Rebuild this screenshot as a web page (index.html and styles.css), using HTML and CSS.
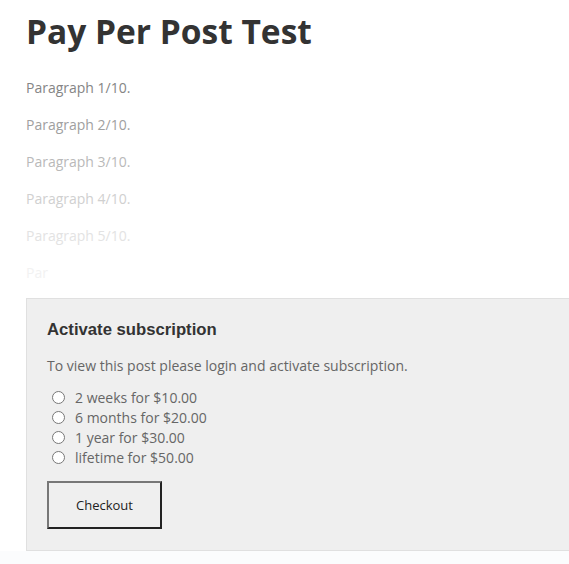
FILE: index.html
```html
<!DOCTYPE html>
<html lang="en">
<head>
<meta charset="utf-8">
<title>Pay Per Post Test</title>
<link rel="stylesheet" href="styles.css">
</head>
<body>
<main class="page">
  <article class="post">
    <h1 class="title">Pay Per Post Test</h1>
    <div class="excerpt">
      <p class="para p1">Paragraph 1/10.</p>
      <p class="para p2">Paragraph 2/10.</p>
      <p class="para p3">Paragraph 3/10.</p>
      <p class="para p4">Paragraph 4/10.</p>
      <p class="para p5">Paragraph 5/10.</p>
      <p class="para p6">Par</p>
    </div>
    <section class="paywall">
      <h3 class="paywall-title">Activate subscription</h3>
      <p class="paywall-text">To view this post please login and activate subscription.</p>
      <ul class="plans">
        <li class="plan"><input type="radio" name="plan" class="radio"><span>2 weeks for $10.00</span></li>
        <li class="plan"><input type="radio" name="plan" class="radio"><span>6 months for $20.00</span></li>
        <li class="plan"><input type="radio" name="plan" class="radio"><span>1 year for $30.00</span></li>
        <li class="plan"><input type="radio" name="plan" class="radio"><span>lifetime for $50.00</span></li>
      </ul>
      <button class="checkout" type="button">Checkout</button>
    </section>
  </article>
  <div class="footer"></div>
</main>
</body>
</html>
```
FILE: styles.css
```css
html, body {
  margin: 0;
  padding: 0;
  background: #ffffff;
}
body {
  font-family: "Open Sans", "Noto Sans", sans-serif;
  color: #333;
}
.page {
  display: flex;
  flex-direction: column;
  min-height: 564px;
}
.post {
  padding: 0 0 0 26px;
}
.title {
  margin: 0;
  padding-top: 9px;
  font-size: 33.5px;
  line-height: 44px;
  font-weight: 700;
  color: #333;
}
.excerpt {
  padding-top: 25px;
}
.para {
  margin: 0 0 18px 0;
  font-size: 14px;
  line-height: 19px;
}
.p1 { color: #858585; }
.p2 { color: #a0a0a0; }
.p3 { color: #b9b9b9; }
.p4 { color: #d0d0d0; }
.p5 { color: #e3e3e3; }
.p6 { color: #f2f2f2; margin-bottom: 16px; }
.paywall {
  background: #efefef;
  border: 1px solid #e0e0e0;
  border-right: none;
  padding: 21px 20px 20px 20px;
  height: 253px;
  box-sizing: border-box;
}
.paywall-title {
  margin: 0;
  font-family: "Liberation Sans", Arial, sans-serif;
  font-size: 16.7px;
  line-height: 20px;
  font-weight: 700;
  color: #333;
}
.paywall-text {
  margin: 16px 0 0 0;
  font-size: 14px;
  line-height: 19px;
  color: #666;
}
.plans {
  list-style: none;
  margin: 12px 0 0 0;
  padding: 0 0 0 4px;
}
.plan {
  display: flex;
  align-items: center;
  height: 20px;
  font-size: 14px;
  color: #666;
}
.radio {
  margin: 0 10px 0 1px;
  width: 13px;
  height: 13px;
}
.checkout {
  margin-top: 14px;
  width: 115px;
  height: 48px;
  background: #efefef;
  border: 2px solid #222;
  border-top-color: #777;
  border-left-color: #777;
  font-family: "Open Sans", "Noto Sans", sans-serif;
  font-size: 13px;
  color: #222;
}
.footer {
  flex: 1;
  background: #fbfcfd;
}
```
